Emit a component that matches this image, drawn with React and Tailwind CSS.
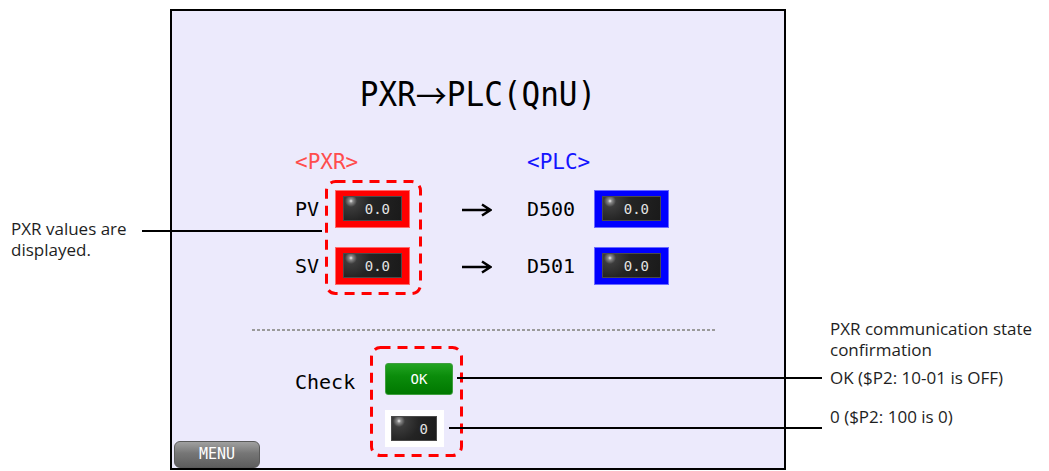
import React from "react";

function DashedFrame({ className = "", children, rx = 9 }) {
  return (
    <div className={`relative ${className}`}>
      <svg className="absolute inset-0 w-full h-full overflow-visible pointer-events-none">
        <rect
          x="1.5"
          y="1.5"
          width="calc(100% - 3px)"
          height="calc(100% - 3px)"
          rx={rx}
          ry={rx}
          fill="none"
          stroke="#ff0000"
          strokeWidth="3"
          strokeDasharray="10 7"
        />
      </svg>
      {children}
    </div>
  );
}

function Screen({ value, pad = "pr-[11px]" }) {
  return (
    <div
      className={`w-full h-full flex items-center justify-end ${pad} border border-[#4a4a4a] bg-[radial-gradient(circle_at_7px_4px,#f0f0f0_0px,#8a8a8a_2px,#3c3c3c_6px,#242424_20px,#1a1a1a_100%)] text-[14px] leading-[14px] text-[#e4e4e4] font-['DejaVu_Sans_Mono',monospace]`}
    >
      {value}
    </div>
  );
}

function ValueBox({ color }) {
  const cls =
    color === "red"
      ? "bg-[#ff0000] border border-[#ff6a6a]"
      : "bg-[#0000ff] border border-[#6a6aff]";
  return (
    <div className={`w-[75px] h-[38px] pt-[5px] pb-[6px] px-[7px] ${cls}`}>
      <Screen value="0.0" />
    </div>
  );
}

function Arrow() {
  return (
    <svg width="31" height="14" viewBox="0 0 31 14">
      <path d="M1 7H29M21 1.5L29.5 7L21 12.5" stroke="#000" strokeWidth="2.5" fill="none" />
    </svg>
  );
}

export default function App() {
  return (
    <div className="relative w-[1049px] h-[471px] bg-white overflow-hidden flex">
      {/* left annotation */}
      <div className="w-[170px] shrink-0 pl-[11px] pt-[218px] text-[17px] leading-[21px] font-['Open_Sans',sans-serif] text-[#1e1e1e]">
        PXR values are
        <br />
        displayed.
      </div>

      {/* panel */}
      <div className="mt-[9px] w-[616px] h-[461px] shrink-0 border-2 border-black bg-[#eceafc] flex flex-col font-['DejaVu_Sans_Mono',monospace] text-black">
        <div className="mt-[67px] h-[33px] flex items-center justify-center text-[31px] leading-[33px] scale-y-110">
          <span>PXR</span>
          <span className="font-['Noto_Sans_CJK_JP',sans-serif] text-[31px] leading-[33px]">→</span>
          <span>PLC(QnU)</span>
        </div>

        <div className="mt-[41px] flex pl-[123px] text-[21px] leading-[21px]">
          <span className="w-[232px] text-[#ff4d4d]">&lt;PXR&gt;</span>
          <span className="text-[#1414ff]">&lt;PLC&gt;</span>
        </div>

        <div className="mt-[7px] flex items-center pl-[123px] text-[20px] leading-[20px]">
          <div className="w-[30px] flex flex-col gap-[19px]">
            <div className="h-[38px] flex items-center">PV</div>
            <div className="h-[38px] flex items-center">SV</div>
          </div>
          <DashedFrame className="pt-[10px] pb-[10px] pl-[10px] pr-[12px]">
            <div className="flex flex-col gap-[19px]">
              <ValueBox color="red" />
              <ValueBox color="red" />
            </div>
          </DashedFrame>
          <div className="ml-[39px] flex flex-col gap-[19px]">
            <div className="h-[38px] flex items-center pt-[2px]">
              <Arrow />
            </div>
            <div className="h-[38px] flex items-center pt-[2px]">
              <Arrow />
            </div>
          </div>
          <div className="ml-[35px] w-[67px] flex flex-col gap-[19px]">
            <div className="h-[38px] flex items-center">D500</div>
            <div className="h-[38px] flex items-center">D501</div>
          </div>
          <div className="flex flex-col gap-[19px]">
            <ValueBox color="blue" />
            <ValueBox color="blue" />
          </div>
        </div>

        <div className="mt-[34px] ml-[80px] w-[465px] h-[2px] bg-[repeating-linear-gradient(to_right,#9a9a9a_0px,#9a9a9a_3px,transparent_3px,transparent_5px)]" />

        <div className="mt-[15px] flex-1 flex">
          <div className="self-end ml-[2px] w-[86px] h-[27px] rounded-[6px] border border-[#5a5a5a] bg-[linear-gradient(#a0a0a0,#767676_45%,#5e5e5e)] flex items-center justify-center text-white text-[15px] leading-[15px]">
            MENU
          </div>
          <div className="self-start ml-[35px] w-[75px] pt-[26px] text-[20px] leading-[20px]">Check</div>
          <DashedFrame className="self-start pt-[17px] pl-[15px] pr-[10px] pb-[10px]">
            <div className="flex flex-col items-start gap-[15px]">
              <div className="w-[68px] h-[32px] rounded-[3px] border border-[#3e9e3e] bg-[linear-gradient(#22a322,#0b8c0b_40%,#007800)] flex items-center justify-center text-white text-[14px] leading-[14px]">
                OK
              </div>
              <div className="w-[59px] h-[37px] bg-white pt-[6px] pb-[6px] pl-[6px] pr-[7px]">
                <Screen value="0" pad="pr-[8px]" />
              </div>
            </div>
          </DashedFrame>
        </div>
      </div>

      {/* right annotation */}
      <div className="pl-[44px] pt-[318px] text-[17px] leading-[21px] font-['Open_Sans',sans-serif] text-[#1e1e1e] whitespace-nowrap">
        <div>
          PXR communication state
          <br />
          confirmation
        </div>
        <div className="mt-[7px]">OK ($P2: 10-01 is OFF)</div>
        <div className="mt-[18px]">0 ($P2: 100 is 0)</div>
      </div>

      {/* callout lines */}
      <div className="absolute left-[142px] top-[230px] w-[180px] h-[2px] bg-black" />
      <div className="absolute left-[457px] top-[377px] w-[365px] h-[2px] bg-black" />
      <div className="absolute left-[449px] top-[427px] w-[373px] h-[2px] bg-black" />
    </div>
  );
}
